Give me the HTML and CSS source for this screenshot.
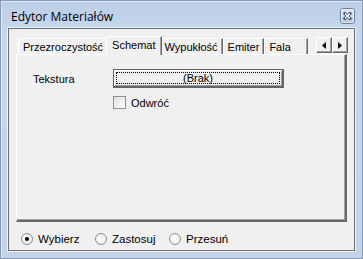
FILE: index.html
```html
<!DOCTYPE html>
<html lang="pl">
<head>
  <meta charset="UTF-8" />
  <title>Edytor Materiałów</title>
  <link rel="stylesheet" href="styles.css">
</head>
<body>

  <div class="window">
    <div class="titlebar">
      <span class="title">Edytor Materiałów</span>
      <button class="close" title="Zamknij">
        <svg width="15" height="16" viewBox="0 0 15 16">
          <defs>
            <linearGradient id="cg" x1="0" y1="0" x2="0" y2="1">
              <stop offset="0" stop-color="#e3eaf5"/>
              <stop offset="1" stop-color="#b7c7df"/>
            </linearGradient>
          </defs>
          <rect x="0.5" y="0.5" width="14" height="15" rx="2" fill="url(#cg)" stroke="#6f82a1"/>
          <rect x="1.5" y="1.5" width="12" height="13" rx="1" fill="none" stroke="#f4f7fc" stroke-opacity="0.7"/>
          <path d="M5 5.5l5 5M10 5.5l-5 5" stroke="#3e4c63" stroke-width="3" stroke-linecap="square"/>
          <path d="M5 5.5l5 5M10 5.5l-5 5" stroke="#ffffff" stroke-width="1.4"/>
        </svg>
      </button>
    </div>

    <div class="client">
      <div class="tabs">
        <div class="tabstrip">
          <div class="tablist">
            <div class="tab">Przezroczystość</div>
            <div class="tab active">Schemat</div>
            <div class="tab">Wypukłość</div>
            <div class="tab">Emiter</div>
            <div class="tab last">Fala</div>
          </div>
          <div class="scroll">
            <span class="arrow">
              <svg width="4" height="7" viewBox="0 0 4 7"><polygon points="4,0 4,7 0,3.5" fill="#000"/></svg>
            </span>
            <span class="arrow">
              <svg width="4" height="7" viewBox="0 0 4 7"><polygon points="0,0 0,7 4,3.5" fill="#000"/></svg>
            </span>
          </div>
        </div>

        <div class="pane">
          <div class="form">
            <span class="label">Tekstura</span>
            <button class="pick">(Brak)</button>
            <span></span>
            <label class="check"><span class="box"></span>Odwróć</label>
          </div>
        </div>
      </div>

      <div class="modes">
        <label class="radio"><span class="dot on"></span>Wybierz</label>
        <label class="radio"><span class="dot"></span>Zastosuj</label>
        <label class="radio"><span class="dot"></span>Przesuń</label>
      </div>
    </div>
  </div>

</body>
</html>
```

FILE: styles.css
```css
body {
  margin: 0;
  background: #fff;
  font-family: 'Liberation Sans', Arial, sans-serif;
  font-size: 11px;
  color: #000;
}

.window {
  width: 363px;
  height: 259px;
  box-sizing: border-box;
  border: 1px solid #8799b3;
  box-shadow: inset 1px 1px rgba(255,255,255,0.5);
  background: linear-gradient(#bccee7, #c5d6ed 27px, #c3d3ea);
  display: flex;
  flex-direction: column;
}

.titlebar {
  height: 27px;
  display: flex;
  align-items: center;
  justify-content: space-between;
  padding: 0 7px 0 10px;
  flex: none;
}

.title {
  font-family: 'Open Sans', 'Liberation Sans', sans-serif;
  font-size: 12px;
  color: #000;
  margin-top: 3px;
}

.close {
  border: none;
  background: none;
  padding: 0;
  width: 15px;
  height: 16px;
  margin-top: 2px;
}

.close svg {
  display: block;
}

.client {
  flex: 1;
  margin: 0 7px 7px 7px;
  border: 1px solid #6e6e6e;
  box-shadow: 0 0 0 1px #eef2f8;
  background: #f0f0f0;
  display: flex;
  flex-direction: column;
}

.tabs {
  margin: 7px 7px 0 7px;
}

.tabstrip {
  height: 18px;
  display: flex;
  align-items: flex-end;
  padding-left: 2px;
}

.tablist {
  flex: 1;
  display: flex;
  align-items: flex-end;
  overflow: hidden;
  height: 19px;
  margin-bottom: -1px;
  position: relative;
  z-index: 1;
}

.tab {
  flex: none;
  height: 13px;
  line-height: 13px;
  padding: 2px 4px 0 4px;
  margin-bottom: 1px;
  border-top: 1px solid #fff;
  border-left: 1px solid #fff;
  border-right: 1px solid #696969;
  box-shadow: inset -1px 0 #a0a0a0;
  background: #f0f0f0;
  white-space: nowrap;
}

.tab.active {
  height: 16px;
  margin: 0 -2px;
  padding: 2px 5px 0 5px;
  position: relative;
  z-index: 2;
}

.tab.last {
  padding-right: 16px;
}

.scroll {
  flex: none;
  display: flex;
  align-self: flex-start;
  margin: 1px -1px 0 3px;
}

.arrow {
  width: 14px;
  height: 14px;
  border-top: 1px solid #fff;
  border-left: 1px solid #fff;
  border-right: 1px solid #696969;
  border-bottom: 1px solid #696969;
  box-shadow: inset -1px -1px #a0a0a0;
  background: #f0f0f0;
  display: flex;
  align-items: center;
  justify-content: center;
}

.pane {
  height: 165px;
  border-top: 1px solid #fff;
  border-left: 1px solid #fff;
  border-right: 2px solid #696969;
  border-bottom: 2px solid #696969;
  box-shadow: inset -1px -1px #a0a0a0;
  background: #f0f0f0;
}

.form {
  display: grid;
  grid-template-columns: 80px 171px;
  row-gap: 8px;
  padding: 14px 0 0 16px;
}

.label {
  align-self: center;
}

.pick {
  height: 19px;
  padding: 0;
  font: inherit;
  color: #000;
  background: #f0f0f0;
  border: 1px solid #646464;
  border-right-width: 2px;
  border-bottom-width: 2px;
  box-shadow: inset 1px 1px #fff, inset -1px -1px #a0a0a0;
  position: relative;
}

.pick::after {
  content: "";
  position: absolute;
  left: 2px;
  top: 2px;
  right: 2px;
  bottom: 2px;
  border: 1px dotted #000;
}

.check {
  display: flex;
  align-items: center;
  gap: 5px;
}

.box {
  width: 11px;
  height: 11px;
  border: 1px solid #8e8f8f;
  background: linear-gradient(135deg, #e0e0e0, #fff);
}

.modes {
  display: flex;
  padding: 11px 0 0 12px;
}

.radio {
  width: 74px;
  display: flex;
  align-items: center;
  gap: 5px;
  height: 12px;
  font-size: 11.5px;
}

.dot {
  width: 10px;
  height: 10px;
  border-radius: 50%;
  border: 1px solid #8e8f8f;
  background: radial-gradient(circle at 40% 40%, #fff, #e4e4e4);
  position: relative;
}

.dot.on::after {
  content: "";
  position: absolute;
  left: 3px;
  top: 3px;
  width: 4px;
  height: 4px;
  border-radius: 50%;
  background: #000;
}
```
